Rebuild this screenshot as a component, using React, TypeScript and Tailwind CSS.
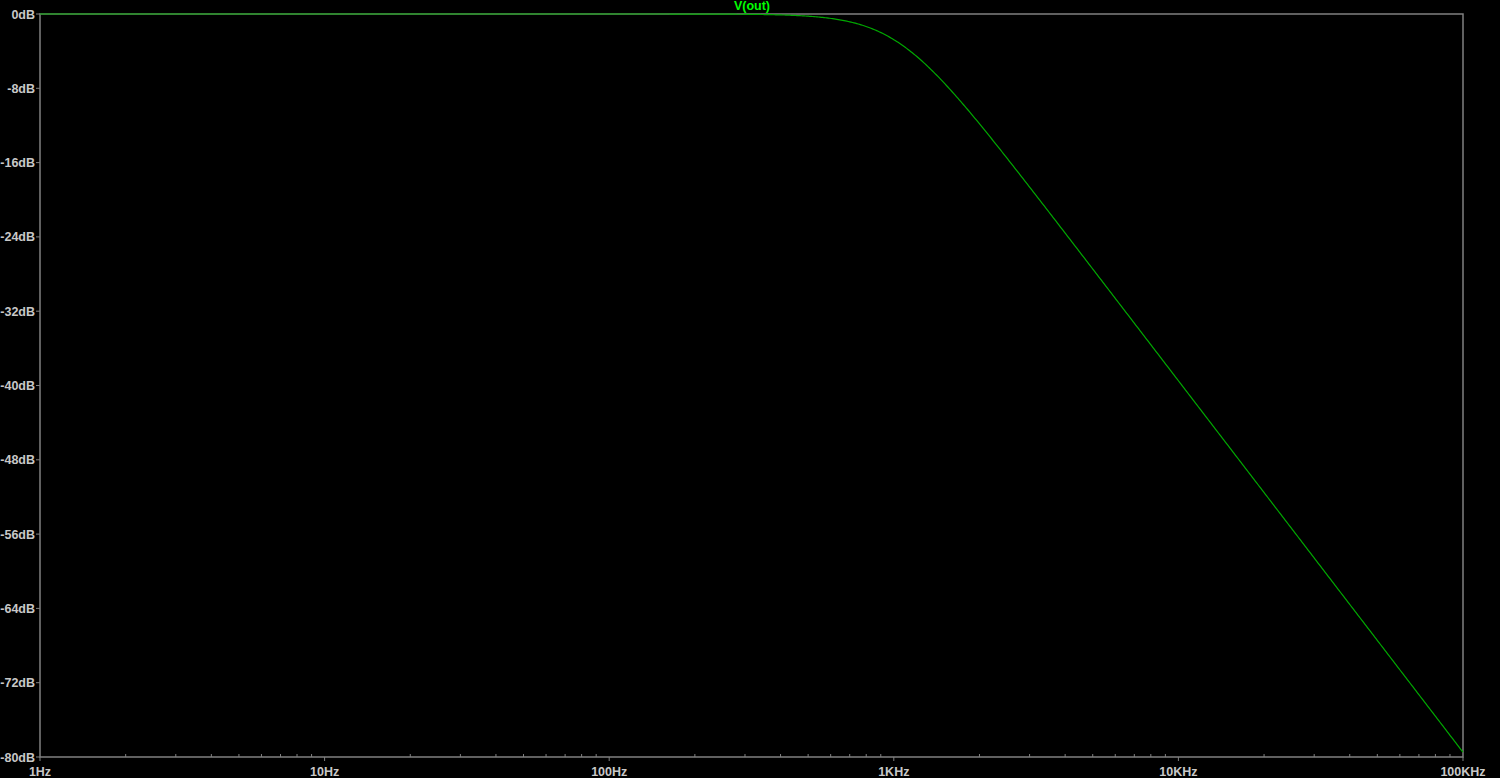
const L = 40;
const R = 1463;
const T = 14;
const B = 757;
const DEC = (R - L) / 5;

const xOf = (f: number) => L + Math.log10(f) * DEC;
const yOf = (db: number) => T + (-db / 80) * (B - T);

const curve = (() => {
  const pts: string[] = [];
  for (let i = 0; i <= 1000; i++) {
    const f = Math.pow(10, (i / 1000) * 5);
    const db = -10 * Math.log10(1 + Math.pow(f / 1030, 4));
    pts.push(`${xOf(f).toFixed(2)},${yOf(db).toFixed(2)}`);
  }
  return pts.join(" ");
})();

const xLabels = ["1Hz", "10Hz", "100Hz", "1KHz", "10KHz", "100KHz"];

export default function App() {
  const minor: number[] = [];
  for (let d = 0; d < 5; d++) for (let m = 2; m <= 9; m++) minor.push(xOf(Math.pow(10, d) * m));

  return (
    <div className="w-[1500px] h-[778px] bg-black overflow-hidden">
      <svg width="1500" height="778" className="block" style={{ fontFamily: "'Liberation Sans', Arial, sans-serif" }}>
        <rect x={L} y={T} width={R - L} height={B - T} fill="none" stroke="#808080" strokeWidth="1.5" />
        {minor.map((x, i) => (
          <line key={i} x1={x} x2={x} y1={B} y2={B - 3} stroke="#808080" />
        ))}
        {xLabels.map((t, i) => (
          <g key={t}>
            <line x1={L + i * DEC} x2={L + i * DEC} y1={B} y2={B + 4} stroke="#808080" />
            <text x={L + i * DEC} y={776} textAnchor="middle" fill="#c8c8c8" fontSize="12.5" fontWeight="bold">{t}</text>
          </g>
        ))}
        {Array.from({ length: 11 }, (_, i) => (
          <g key={i}>
            <line x1={L - 4} x2={L} y1={yOf(-8 * i)} y2={yOf(-8 * i)} stroke="#808080" />
            <text x={35} y={yOf(-8 * i) + 4.5} textAnchor="end" fill="#c8c8c8" fontSize="12.5" fontWeight="bold">{i === 0 ? "0dB" : `-${8 * i}dB`}</text>
          </g>
        ))}
        <polyline points={curve} fill="none" stroke="#00a800" strokeWidth="1.2" />
        <text x={752} y={10} textAnchor="middle" fill="#00ff00" fontSize="12.5" fontWeight="bold">V(out)</text>
      </svg>
    </div>
  );
}
